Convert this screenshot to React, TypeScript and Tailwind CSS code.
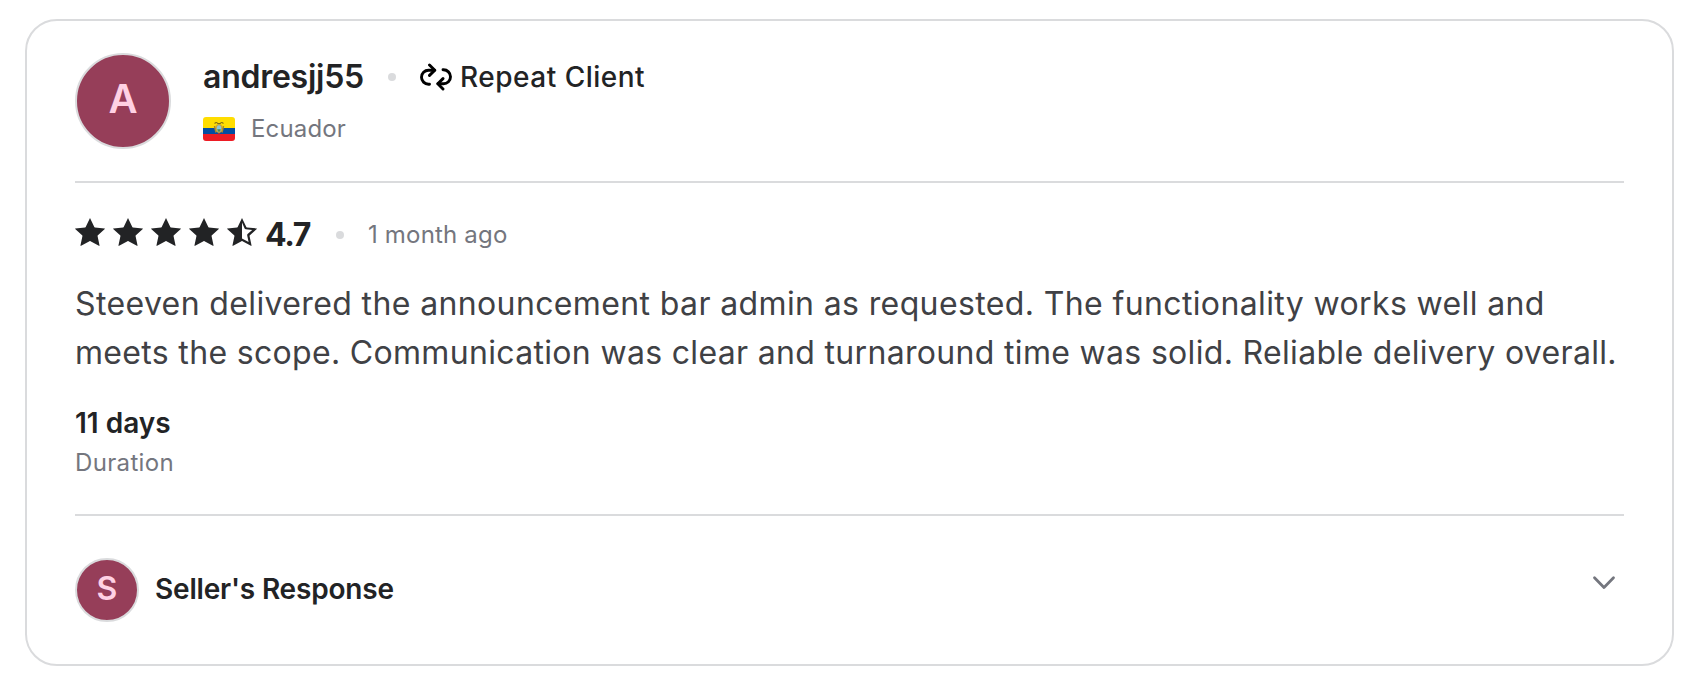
const STAR =
  "M15 0L19.3 8.9C19.4 9.2 19.6 9.4 19.9 9.4L29.6 10.4C30 10.5 30.1 10.8 29.8 11.1L22.9 17.3C22.6 17.6 22.5 17.9 22.6 18.2L24.5 27.3C24.6 27.8 24.3 28 23.9 27.8L15.5 23.2C15.2 23 14.8 23 14.5 23.2L6.1 27.8C5.7 28 5.4 27.8 5.5 27.3L7.4 18.2C7.5 17.9 7.4 17.6 7.1 17.3L0.2 11.1C-0.1 10.8 0 10.5 0.4 10.4L10.1 9.4C10.4 9.4 10.6 9.2 10.7 8.9Z";

function Star({ half = false }: { half?: boolean }) {
  return (
    <svg width="30" height="28" viewBox="0 0 30 28" fill="#222325">
      <path d={STAR} />
      {half && (
        <path d="M15 4.6L17.6 10.4C17.8 10.9 18.2 11.2 18.8 11.3L25.2 12L20.6 16.1C20.3 16.4 20.1 16.9 20.2 17.4L21.6 24L15 20.4Z" fill="#fff" />
      )}
    </svg>
  );
}

function Dot() {
  return <span className="h-2 w-2 shrink-0 rounded-full bg-[#dadbdd]" />;
}

function RepeatIcon() {
  return (
    <svg width="32" height="28" viewBox="0 0 32 28" fill="none" stroke="#000" strokeWidth="2.9" strokeLinecap="round" strokeLinejoin="round">
      <path d="M9.5 21.2H8.5A6.9 6.9 0 0 1 8.5 7.2H14.5" />
      <path d="M9.5 2L14.8 7.2L9.5 12.4" />
      <path d="M23 6.8H23.5A6.9 6.9 0 0 1 23.5 20.8H18" />
      <path d="M23 15.6L17.8 20.8L23 26" />
    </svg>
  );
}

function EcuadorFlag() {
  return (
    <svg width="32" height="24" viewBox="0 0 32 24">
      <defs>
        <clipPath id="flag">
          <rect width="32" height="24" rx="3" />
        </clipPath>
      </defs>
      <g clipPath="url(#flag)">
        <rect width="32" height="12" fill="#ffdd00" />
        <rect y="11" width="32" height="6" fill="#034ea2" />
        <rect y="17" width="32" height="7" fill="#ed1c24" />
      </g>
      <path d="M11.5 6.2L13.5 5.6L16 7L18.5 5.6L20.5 6.2" fill="none" stroke="#5b4a1c" />
      <path d="M11.5 9L13 15.5M20.5 9L19 15.5" stroke="#a8842b" strokeWidth="1.5" />
      <ellipse cx="16" cy="11.5" rx="3.4" ry="4.4" fill="#c9a63b" />
      <ellipse cx="16" cy="11.5" rx="2.2" ry="3.2" fill="#8cc6d8" />
      <path d="M14.2 12.2H17.8Q17.6 14.6 16 14.9Q14.4 14.6 14.2 12.2Z" fill="#4f8f4a" />
      <path d="M14.8 16H17.2L16 18.5Z" fill="#a8323a" />
    </svg>
  );
}

export default function App() {
  return (
    <main className="h-[678px] w-[1692px] bg-white pt-[19px] pl-[25px] font-['Inter',sans-serif] text-[#222325]">
      <article className="flex h-[647px] w-[1649px] flex-col rounded-[32px] border-2 border-[#dadbdd] px-12">
        <header className="flex h-[162px] shrink-0 border-b-2 border-[#dadbdd] pt-8">
          <div className="flex h-24 w-24 items-center justify-center rounded-full border-2 border-[#dadbdd] bg-[#963e59] pb-[5px] text-[40px] font-semibold text-[#ffd1e4]">
            A
          </div>
          <div className="ml-8 pt-1">
            <div className="flex h-10 items-center whitespace-nowrap">
              <span className="w-[160px] text-[32px] font-semibold tracking-[-0.25px]">andresjj55</span>
              <span className="ml-[25px] flex"><Dot /></span>
              <span className="ml-6 flex"><RepeatIcon /></span>
              <span className="ml-2 text-[28px] font-medium tracking-[0.5px]">Repeat Client</span>
            </div>
            <div className="mt-5 flex h-6 items-center">
              <EcuadorFlag />
              <span className="ml-4 text-2xl tracking-[0.15px] text-[#74767e]">Ecuador</span>
            </div>
          </div>
        </header>

        <section className="h-[333px] shrink-0 border-b-2 border-[#dadbdd] pt-8">
          <div className="flex h-10 items-center whitespace-nowrap">
            <div className="flex gap-2 pb-1.5">
              <Star />
              <Star />
              <Star />
              <Star />
              <Star half />
            </div>
            <span className="ml-2 w-[46px] text-[32px] font-bold tracking-[-1.4px]">4.7</span>
            <span className="ml-[25px] flex"><Dot /></span>
            <span className="ml-6 text-2xl tracking-[0.18px] text-[#74767e]">1 month ago</span>
          </div>
          <p className="mt-6 text-[32px] leading-[49px] whitespace-nowrap text-[#404145]">
            <span className="block tracking-[0.375px]">Steeven delivered the announcement bar admin as requested. The functionality works well and</span>
            <span className="block tracking-[0.325px]">meets the scope. Communication was clear and turnaround time was solid. Reliable delivery overall.</span>
          </p>
          <div className="mt-[26px] text-[28px] leading-10 font-semibold">11 days</div>
          <div className="text-2xl leading-10 tracking-[0.35px] text-[#74767e]">Duration</div>
        </section>

        <footer className="flex pt-[42px]">
          <div className="flex h-16 w-16 items-center justify-center rounded-full border-2 border-[#dadbdd] bg-[#963e59] pb-[3px] text-[32px] font-semibold text-[#ffd1e4]">
            S
          </div>
          <span className="ml-4 text-[28px] leading-[63px] font-semibold tracking-[-0.18px]">Seller's Response</span>
          <svg className="mt-[17px] mr-2 ml-auto" width="24" height="16" viewBox="0 0 24 16" fill="none" stroke="#74767e" strokeWidth="2.8" strokeLinecap="round" strokeLinejoin="round">
            <path d="M2.5 2.8L12 12.4L21.5 2.8" />
          </svg>
        </footer>
      </article>
    </main>
  );
}
